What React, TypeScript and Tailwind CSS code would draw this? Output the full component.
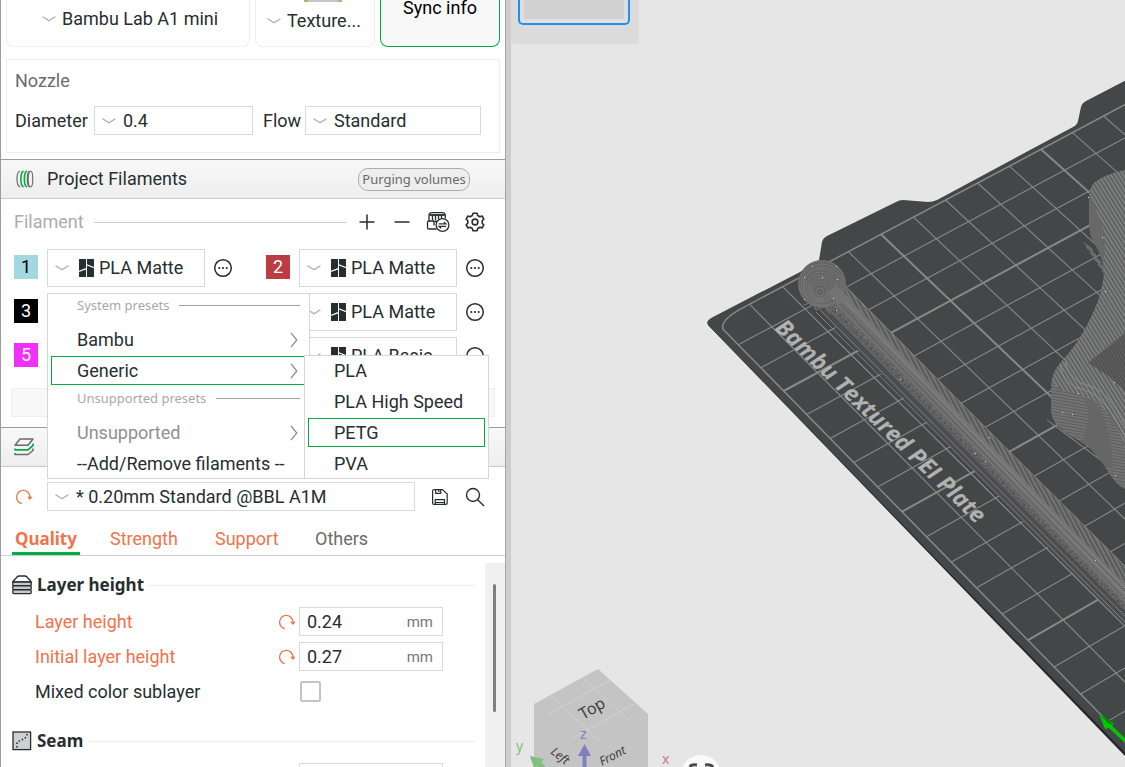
import React, { useState } from 'react'

interface Filament {
  id: number
  name: string
  badge: string
}

const filaments: Filament[] = [
  { id: 1, name: 'PLA Matte', badge: 'bg-[#a3d8e1] text-black' },
  { id: 2, name: 'PLA Matte', badge: 'bg-[#bb3d43] text-white' },
  { id: 3, name: 'PLA Matte', badge: 'bg-black text-white' },
  { id: 4, name: 'PLA Matte', badge: 'bg-[#3f8e43] text-white' },
  { id: 5, name: 'PLA Basic', badge: 'bg-[#f330f9] text-white' },
  { id: 6, name: 'PLA Basic', badge: 'bg-[#f7d959] text-black' }
]

const genericTypes = ['PLA', 'PLA High Speed', 'PETG', 'PVA']

const tabs = [
  { name: 'Quality', changed: true, width: 'w-[68px]' },
  { name: 'Strength', changed: true, width: 'w-[78px]' },
  { name: 'Support', changed: true, width: 'w-[73px]' },
  { name: 'Others', changed: false, width: 'w-[64px]' }
]

// ---------- icons ----------

const ChevronDown = ({ className = '' }: { className?: string }) => (
  <svg className={className} width="14" height="6" viewBox="0 0 14 6" fill="none" stroke="#acacac" strokeWidth="1.3">
    <path d="M.5.7 C3 2.2 4.5 3.2 7 4.8 C9.500 3.200 11 2.200 13.500.7" />
  </svg>
)

const ChevronRight = () => (
  <svg width="8" height="16" viewBox="0 0 8 16" fill="none" stroke="#8c8c8c" strokeWidth="1.3">
    <path d="M1 .8 L6.800 8 L1 15.200" />
  </svg>
)

const BrandMark = ({ className = '' }: { className?: string }) => (
  <svg className={className} width="15" height="18" viewBox="0 0 15 18">
    <path d="M0 0 H7 V9.100 L0 11.700 Z M0 13 L7 10.400 V18 H0 Z M8 0 H15 V7.900 L8 5.200 Z M8 6.500 L15 9.200 V18 H8 Z" fill="#262e30" />
  </svg>
)

const MoreIcon = () => (
  <svg width="20" height="20" viewBox="0 0 20 20" fill="none" stroke="#262e30" strokeWidth="1.500">
    <circle cx="10" cy="10" r="8.300" />
    <g fill="#262e30" stroke="none">
      <circle cx="6.300" cy="10" r="1.100" />
      <circle cx="10" cy="10" r="1.100" />
      <circle cx="13.700" cy="10" r="1.100" />
    </g>
  </svg>
)

const SpoolIcon = () => (
  <svg width="20" height="20" viewBox="0 0 20 20" fill="none" strokeWidth="1.200">
    <path d="M5 2 C1 3.500 1 16.500 5 18" stroke="#6b6b6b" />
    <path d="M8.500 2 C5 3.500 5 16.500 8.500 18 M12 2 C8.500 3.500 8.500 16.500 12 18" stroke="#00ae42" strokeWidth="1.600" />
    <path d="M14.500 2 C11.500 3.500 11.500 16.500 14.500 18" stroke="#6b6b6b" />
    <ellipse cx="15.500" cy="10" rx="2.300" ry="8" stroke="#6b6b6b" />
  </svg>
)

const LayersIcon = () => (
  <svg width="20" height="18" viewBox="0 0 20 18" fill="none" strokeWidth="1.500" strokeLinejoin="round">
    <path d="M6 1 H19 L14 7.300 H1 Z" stroke="#6b6b6b" />
    <path d="M1 10.500 V11.800 H14 L19 7.500 V5.500" stroke="#00ae42" strokeWidth="1.700" />
    <path d="M1 15 V16.500 H14 L19 12.500 V10.500" stroke="#6b6b6b" />
  </svg>
)

const AmsIcon = () => (
  <svg width="24" height="22" viewBox="0 0 24 22" fill="none" stroke="#262e30" strokeWidth="1.300">
    <path d="M3 10 V4.500 Q3 1.600 6 1.600 H16 Q19.300 1.600 19.300 4.500 V7.500" />
    <path d="M3.500 4 H18.800" strokeWidth="1.800" />
    <path d="M6.500 4 V9.500 M9.500 4 V9.500 M12.500 4 V8.500 M15.500 4 V7.500" />
    <path d="M8 10 H3 Q1.500 10 1.500 11.500 V16.700 Q1.500 18 3 18 H10.500 M8 10 V14.500 M8 10.500 H11" />
    <circle cx="16.500" cy="14" r="6.400" fill="#fff" />
    <path d="M12.800 12.800 H20 L17.800 10.900 M20.200 15.300 H13 L15.200 17.200" strokeWidth="1.200" />
  </svg>
)

const GearIcon = () => (
  <svg width="20" height="20" viewBox="0 0 20 20" fill="none" stroke="#262e30" strokeWidth="1.600" strokeLinejoin="round">
    <path d="M8 1.300 H12 L12.700 3.500 L14.800 4.700 L17 4 L18.800 7.200 L17.200 8.800 V11.200 L18.800 12.800 L17 16 L14.800 15.300 L12.700 16.500 L12 18.700 H8 L7.300 16.500 L5.200 15.300 L3 16 L1.200 12.800 L2.800 11.200 V8.800 L1.200 7.200 L3 4 L5.200 4.700 L7.300 3.500 Z" />
    <circle cx="10" cy="10" r="2.900" />
  </svg>
)

const ResetIcon = () => (
  <svg width="18" height="16" viewBox="0 0 18 16" fill="none" stroke="#f0734b" strokeWidth="1.300">
    <path d="M6.700 14.600 A6.700 6.700 0 1 1 15 8" />
    <path d="M12 7.700 H17.600 L14.900 11 Z" fill="#f0734b" stroke="none" />
  </svg>
)

const SaveIcon = () => (
  <svg width="18" height="18" viewBox="0 0 18 18" fill="none" stroke="#262e30" strokeWidth="1.200">
    <path d="M3 1.600 H11.500 L16.200 6 V15 Q16.200 16.400 14.800 16.400 H3 Q1.600 16.400 1.600 15 V3 Q1.600 1.600 3 1.600 Z" />
    <path d="M4.700 1.600 V5.300 H9.700 V1.600 M7.800 2 V4 M4.200 16.400 V11.700 H13.500 V16.400 M4.200 14.500 H13.500" />
  </svg>
)

const SearchIcon = () => (
  <svg width="20" height="20" viewBox="0 0 20 20" fill="none" stroke="#262e30" strokeWidth="1.400">
    <circle cx="8" cy="8" r="6.500" />
    <path d="M12.700 12.700 L19 19" />
  </svg>
)

const LayerHeightIcon = () => (
  <svg width="20" height="20" viewBox="0 0 20 20" fill="#c9c9c9" stroke="#262e30" strokeWidth="1.300">
    <path d="M.8 7 Q1 6 4 3.200 Q5.500 1 7 1 H13 Q14.500 1 16 3.200 Q19 6 19.200 7 Z" fill="#fff" />
    <rect x=".8" y="7" width="18.400" height="3.700" rx="1" />
    <rect x=".8" y="10.900" width="18.400" height="3.700" rx="1" />
    <rect x=".8" y="14.900" width="18.400" height="3.700" rx="1" />
  </svg>
)

const SeamIcon = () => (
  <svg width="20" height="20" viewBox="0 0 20 20" fill="#cfcfcf" stroke="#262e30" strokeWidth="1.300">
    <rect x="1" y="1" width="17.600" height="17.600" />
    <path d="M5 16.500 V11.500 L9 9 L13 7.500 L16 2" fill="none" strokeDasharray="1.500 2" strokeWidth="1.600" />
  </svg>
)

// ---------- shared controls ----------

interface ComboProps {
  label: string
  value: string
  className?: string
  selectClass?: string
  icon?: boolean
}

const Combo: React.FC<ComboProps> = ({
  label,
  value,
  className = 'h-[29px]',
  selectClass = 'border border-[#d9d9d9] pl-7',
  icon = false
}) => (
  <div className={`relative ${className}`}>
    <select
      aria-label={label}
      className={`block h-full w-full appearance-none bg-white outline-none ${selectClass}`}
    >
      <option>{value}</option>
    </select>
    <ChevronDown className="pointer-events-none absolute top-1/2 left-2 -translate-y-1/2" />
    {icon && <BrandMark className="pointer-events-none absolute top-1/2 left-8 -translate-y-1/2" />}
  </div>
)

const MenuHeading = ({ children }: { children: React.ReactNode }) => (
  <div className="mb-[5px] flex h-6 items-center gap-2.5 pr-[9px] pb-0.5 pl-[29px] font-['Noto_Sans',sans-serif] text-[13px] text-[#a8a8a8]">
    {children}
    <span className="h-px flex-1 bg-[#a0a0a0]" />
  </div>
)

const PresetMenu = () => {
  const [hovered, setHovered] = useState('PETG')

  return (
    <div className="absolute top-0 left-0 z-10 flex w-[263px] flex-col gap-0.5 border border-[#d6d6d6] bg-white">
      <MenuHeading>System presets</MenuHeading>
      <button className="mx-[3px] flex h-[29px] items-center justify-between border border-transparent pr-[7px] pl-[25px]">
        Bambu
        <ChevronRight />
      </button>
      <button className="mx-[3px] flex h-[29px] items-center justify-between border border-[#00ae42] pr-[7px] pl-[25px]">
        Generic
        <ChevronRight />
      </button>
      <MenuHeading>Unsupported presets</MenuHeading>
      <button className="mx-[3px] flex h-[29px] items-center justify-between border border-transparent pr-[7px] pl-[25px] text-[#909090]">
        Unsupported
        <ChevronRight />
      </button>
      <button className="mx-[3px] flex h-[29px] items-center border border-transparent pl-[25px] whitespace-nowrap">
        --Add/Remove filaments --
      </button>

      <div className="absolute -bottom-px left-64 flex w-[185px] flex-col gap-0.5 border border-[#d6d6d6] bg-white">
        {genericTypes.map(type => (
          <button
            key={type}
            onMouseEnter={() => setHovered(type)}
            className={`mx-[3px] flex h-[29px] items-center border pl-[25px] whitespace-nowrap ${
              hovered === type ? 'border-[#00ae42]' : 'border-transparent'
            }`}
          >
            {type}
          </button>
        ))}
      </div>
    </div>
  )
}

const GroupTitle = ({ icon, children }: { icon: React.ReactNode; children: React.ReactNode }) => (
  <div className="flex h-7 items-center gap-[5px]">
    {icon}
    <h3 className="font-['Noto_Sans',sans-serif] text-[17px] font-bold">{children}</h3>
    <span className="h-px flex-1 bg-[#ececec]" />
  </div>
)

const NumberRow = ({ id, label, value }: { id: string; label: string; value: string }) => (
  <div className="mb-1.5 flex h-[29px] items-center pl-[23px]">
    <label htmlFor={id} className="flex-1 text-[#f0734b]">{label}</label>
    <button aria-label={`Reset ${label}`} className="mr-[3px]">
      <ResetIcon />
    </button>
    <div className="mr-8 flex h-full w-36 items-center border border-[#d9d9d9] pr-[9px] pl-[7px]">
      <input id={id} defaultValue={value} className="w-0 flex-1 outline-none" />
      <span className="text-[15px] text-[#777]">mm</span>
    </div>
  </div>
)

// ---------- 3D view ----------

// bed coordinates (cells of 10 mm) to screen
const project = (u: number, v: number) => {
  const w = 1 + 0.003125 * u - 0.00595 * v
  return [(716 + 35.75 * u + 17.88 * v) / w, (322 - 16.8 * u + 20.67 * v) / w]
}

const bedLine = (u1: number, v1: number, u2: number, v2: number) => {
  const [x1, y1] = project(u1, v1)
  const [x2, y2] = project(u2, v2)
  return `M${x1.toFixed(1)} ${y1.toFixed(1)} L${x2.toFixed(1)} ${y2.toFixed(1)}`
}

const steps = Array.from({ length: 18 }, (_, i) => i)

const zigzag = (x: number, y: number, dx: number, dy: number, n: number) => {
  let d = `M${x} ${y}`
  for (let i = 0; i < n; i++) {
    d += ` l7 5 l${dx} ${dy} l-7 -5 l${dx} ${dy}`
  }
  return d
}

const Bed = () => (
  <g>
    <path
      d="M708 325 L1125 756 V751 L711 321 Z"
      fill="#242727"
    />
    <path
      d="M713 317 L800 272 L819 260 L822 242 Q823 238 827 236 L896 202 Q899 200 903 200 L928 202 Q933 202 937 200 L1073 127 Q1077 125 1078 121 L1081 107 Q1082 103 1086 101 L1140 73 V768 L708 325 Q705 321 713 317 Z"
      fill="#434747"
    />
    <g fill="none" stroke="#858a87">
      {steps.filter(i => i > 0).map(i => (
        <path key={`u${i}`} d={bedLine(i, 0, i, 18)} strokeWidth={i % 5 === 0 ? 2 : 1.1} />
      ))}
      {steps.filter(i => i > 0).map(i => (
        <path key={`v${i}`} d={bedLine(0, i, 18, i)} strokeWidth={i % 5 === 3 ? 2 : 1.1} />
      ))}
      <path d={`${bedLine(18, 0, 0.8, 0)} Q720 320 723 329 L${bedLine(0, 0.7, 0, 16).slice(1)}`} strokeWidth="1.500" />
    </g>
    <text
      transform="translate(774 329) rotate(44)"
      fontFamily="'Open Sans', sans-serif"
      fontWeight="700"
      fontStyle="italic"
      fontSize="23"
      fill="#b0b2b1"
    >
      Bambu Textured PEI Plate
    </text>
  </g>
)

const sparks = [
  [812, 266], [822, 277], [836, 266], [837, 279], [804, 277], [833, 298], [836, 310], [900, 379],
  [989, 437], [975, 453], [985, 461], [1095, 560], [804, 299], [1105, 291], [1078, 393], [1062, 412],
  [1072, 414], [1115, 475], [1114, 382], [1088, 197], [1102, 237]
]

const Models = () => (
  <g>
    <defs>
      <pattern id="hatch" width="4" height="4" patternUnits="userSpaceOnUse" patternTransform="rotate(-28)">
        <rect width="4" height="4" fill="#747474" />
        <rect width="1.500" height="4" fill="#505252" />
      </pattern>
      <pattern id="steep" width="3.500" height="3.500" patternUnits="userSpaceOnUse" patternTransform="rotate(-32)">
        <rect width="4" height="4" fill="#7e7e7e" />
        <rect width="1.300" height="4" fill="#575858" />
      </pattern>
      <pattern id="wall" width="3" height="3" patternUnits="userSpaceOnUse" patternTransform="rotate(10)">
        <rect width="3" height="3" fill="#737373" />
        <rect width="3" height="1" fill="#5d5d5d" />
      </pattern>
      <pattern id="notch" width="3" height="3" patternUnits="userSpaceOnUse" patternTransform="rotate(60)">
        <rect width="3" height="3" fill="#5d5d5d" />
        <rect width="3" height="1" fill="#4d4d4d" />
      </pattern>
    </defs>

    {/* rod */}
    <path d="M815 306 L830 300 L1125 600 V627 Z" fill="#4b4e4e" />
    <path d="M804 305 l8 -3 l4 8 l8 -4 l6 8 M808 312 L1125 626 M816 312 L1125 622 M820 310 L1125 616" stroke="#858686" strokeWidth=".9" fill="none" />
    <path d="M823 305 L838 295 L1125 582 V611 Z" fill="#676767" />
    <path d="M832 284 L846 286 L983 425 L1125 566 V585 Z" fill="url(#hatch)" />
    <path d="M830 292 L838 288 L1125 584 V598 Z" fill="#747474" />
    <path d="M834 290 L1125 588 M834 295 L1125 594 M830 297 L1125 601 M845 286 L983 425 L1125 566" stroke="#8a8a8a" strokeWidth=".8" fill="none" />
    <path d="M832 293 L1125 591 M831 302 L1125 605" stroke="#585858" strokeWidth=".8" />
    <path d="M829 304 L1125 608" stroke="#505151" strokeWidth="2" strokeDasharray="2 3 1 2 3 4" />
    <path d="M828 306 L1125 611" stroke="#4c4e4e" strokeWidth="1" strokeDasharray="3 2 6 2" />
    <path d="M830 301 L1125 604" stroke="#868686" strokeWidth=".8" strokeDasharray="2 5 4 3" />

    {/* ball end */}
    <circle cx="822" cy="284" r="24" fill="#646464" />
    <g fill="none" stroke="#7c7c7c" strokeWidth=".7">
      <circle cx="820" cy="292" r="4" />
      <circle cx="820" cy="291" r="7" />
      <circle cx="820" cy="290" r="9" />
      <circle cx="821" cy="289" r="11" />
      <circle cx="821" cy="288" r="13" />
      <circle cx="821" cy="287" r="15" />
      <circle cx="821" cy="286" r="17" />
      <circle cx="822" cy="286" r="19" />
      <circle cx="822" cy="285" r="21" />
      <circle cx="822" cy="284" r="23" />
    </g>
    <path d="M826 293 L837 286 L852 300 L838 304 Z" fill="#747474" />

    {/* large part */}
    <path d={zigzag(1084, 243, 2, 3, 8)} fill="none" stroke="#7b7d7c" strokeWidth="1" />
    <path d={zigzag(1047, 420, 4, 3, 11)} fill="none" stroke="#7b7d7c" strokeWidth="1" />
    <path
      d="M1125 170 Q1105 174 1095 182 Q1089 187 1089 198 V223 Q1089 235 1095 244 Q1104 258 1104 272 Q1103 295 1087 325 Q1077 345 1060 363 Q1051 373 1051 388 V408 Q1051 420 1060 428 Q1068 435 1080 441 Q1098 452 1107 470 Q1115 484 1125 489 Z"
      fill="url(#steep)"
    />
    <path d="M1089 192 V223 Q1089 235 1095 244 Q1100 252 1103 266 Q1107 240 1102 225 Q1094 205 1089 192 Z" fill="#686868" />
    <path d="M1052 382 Q1051 390 1051 408 Q1051 420 1060 428 Q1068 435 1080 441 Q1098 452 1107 470 Q1115 484 1125 489 V450 Q1118 420 1098 403 Q1078 392 1063 391 Z" fill="url(#wall)" />
    <path d="M1094 400 Q1110 420 1113 468 L1105 466 Q1090 447 1082 441 Q1092 420 1085 398 Z" fill="#666" />
    <path d="M1125 333 L1088 363 L1108 376 L1125 391 Z" fill="url(#notch)" />
    <path d="M1060 365 Q1064 387 1085 390 Q1108 398 1125 438 M1065 362 Q1070 382 1092 387 Q1110 393 1125 425" fill="none" stroke="#929292" strokeWidth=".8" />
    <g fill="#e2e2e2">
      {sparks.map(([x, y]) => <rect key={`${x}-${y}`} x={x} y={y} width="1" height="1" />)}
    </g>
  </g>
)

const ViewCube = () => (
  <g fontFamily="'Noto Sans', sans-serif">
    <path d="M534 704 L598 669 L648 714 V767 H534 Z" fill="#c4c4c4" />
    <path d="M547 715 L610 680 M573 738 L634 704 M551 696 L600 741 M584 679 L631 722" stroke="#d2d2d2" strokeWidth="1" />
    <text transform="translate(583 720) rotate(-30)" fontSize="16" fill="#404040">Top</text>
    <text transform="translate(550 753) rotate(38)" fontSize="12" fontStyle="italic" fill="#404040">Left</text>
    <text transform="translate(602 766) rotate(-28)" fontSize="12" fontStyle="italic" fill="#404040">Front</text>
    <path d="M578 756 L584.500 744 L591 756 H586.500 V767 H582.500 V756 Z" fill="#7f7fc1" />
    <path d="M530 756 L544 759 L541 762 L546 767 H538 L537 766 L534 768 Z" fill="#7fc07f" />
    <text x="580" y="739" fontSize="14" fill="#7f7fc1">z</text>
    <text x="516" y="751" fontSize="14" fill="#7fc07f">y</text>
    <text x="662" y="764" fontSize="14" fill="#c17f7f">x</text>
    <circle cx="701" cy="775" r="20" fill="#fafafa" />
    <path d="M690 767 Q691 764 697 765 M705 765 Q711 764 713 767" stroke="#4a4a4a" strokeWidth="3" fill="none" />
  </g>
)

const PlateView = () => (
  <main className="relative min-w-0 flex-1 bg-[#e6e6e6]">
    <svg className="block h-full w-full" viewBox="511 0 614 767" preserveAspectRatio="xMinYMin slice">
      <Bed />
      <Models />
      <ViewCube />
      <path d="M1099 714 L1114 723 L1112 726 L1126 739 V744 L1109 728 L1105 729 Z" fill="#00c800" />
      <path d="M1099 714 L1114 723 L1110 725 Z" fill="#008a00" />
    </svg>
    <div className="absolute top-0 left-0 h-11 w-32 rounded-b-sm bg-[#dbdbdb] pr-[9px] pl-[7px]">
      <button aria-label="Plate 1" className="block h-[25px] w-full rounded-b-[5px] border-2 border-t-0 border-[#2490ee] bg-[#dfdfdf] px-1 pb-1">
        <span className="block h-full bg-[#d2d2d2]" />
      </button>
    </div>
  </main>
)

// ---------- page ----------

export default function App() {
  const [activeTab, setActiveTab] = useState('Quality')

  return (
    <div className="flex h-screen overflow-hidden bg-white font-['HarmonyOS_Sans','Roboto',sans-serif] text-lg leading-6 text-[#262e30]">
      <aside className="flex w-[511px] shrink-0 flex-col border-r-[5px] border-l border-l-[#9c9c9c] border-r-[#cdcdcd]">
        <div className="flex min-h-0 flex-1 flex-col border-r border-[#a5a5a5]">
          {/* printer */}
          <div className="flex h-[47px] shrink-0 gap-[5px] pr-[5px] pl-[5px]">
            <div className="w-[244px] rounded-b-lg border border-t-0 border-[#eee] pt-[5px] pl-[27px]">
              <Combo label="Printer" value="Bambu Lab A1 mini" className="h-7" selectClass="pl-7" />
            </div>
            <div className="flex w-[120px] flex-col rounded-b-lg border border-t-0 border-[#eee] pl-[3px]">
              <span className="ml-[45px] h-0.5 w-[38px] border-x-4 border-[#c9a878] bg-[#c6c6c6]" />
              <Combo label="Plate type" value="Texture..." className="mt-[5px] h-7" selectClass="pl-7" />
            </div>
            <button className="flex flex-1 justify-center rounded-b-lg border border-t-0 border-[#00ae42] bg-[#f8f8f8] leading-4 text-black">
              Sync info
            </button>
          </div>

          <section className="mt-3 mr-[5px] ml-[5px] h-[94px] shrink-0 border border-[#eee] pt-[9px] pl-2">
            <h2 className="text-[#6b6b6b]">Nozzle</h2>
            <div className="mt-[13px] flex h-[29px] items-center">
              <span className="w-[79px]">Diameter</span>
              <Combo label="Diameter" value="0.4" className="h-[29px] w-[159px]" />
              <span className="ml-2.5 w-[42px]">Flow</span>
              <Combo label="Flow" value="Standard" className="h-[29px] w-44" />
            </div>
          </section>

          <header className="mt-1.5 flex h-10 shrink-0 items-center border-t border-b border-t-[#9c9c9c] border-b-[#c8c8c8] bg-linear-to-b from-[#f8f8f8] to-[#eee] pr-[35px] pl-[14px]">
            <SpoolIcon />
            <h2 className="ml-3 flex-1">Project Filaments</h2>
            <button className="h-[23px] w-28 rounded-[10px] border border-[#acacac] bg-[#eee] font-['Noto_Sans',sans-serif] text-[13px] leading-5 whitespace-nowrap text-[#6b6b6b]">
              Purging volumes
            </button>
          </header>

          {/* filament list */}
          <div className="mt-[11px] flex h-6 shrink-0 items-center pr-5 pl-[13px]">
            <span className="text-[#acacac]">Filament</span>
            <span className="mr-2.5 ml-2.5 h-px flex-1 bg-[#cecece]" />
            <button aria-label="Add filament" className="mr-[11px] flex h-5 w-5 items-center justify-center">
              <svg width="16" height="16" viewBox="0 0 16 16" stroke="#262e30" strokeWidth="1.500"><path d="M8 .5 V15.500 M.5 8 H15.500" /></svg>
            </button>
            <button aria-label="Remove filament" className="mr-[14px] ml-1 flex h-5 w-5 items-center justify-center">
              <svg width="16" height="16" viewBox="0 0 16 16" stroke="#262e30" strokeWidth="1.500"><path d="M.5 8 H15.500" /></svg>
            </button>
            <button aria-label="Sync AMS" className="mr-[15px]"><AmsIcon /></button>
            <button aria-label="Filament settings"><GearIcon /></button>
          </div>

          <div className="mt-[15px] grid shrink-0 grid-cols-2 gap-x-[33px] gap-y-1.5 pr-5 pl-[13px]">
            {filaments.map(f => (
              <div key={f.id} className="flex h-[38px] items-center">
                <span className={`-mt-0.5 flex h-6 w-6 items-center justify-center ${f.badge}`}>{f.id}</span>
                <div className="relative mr-2 ml-[9px] flex-1">
                  <Combo
                    label={`Filament ${f.id}`}
                    value={f.name}
                    className="h-[38px]"
                    selectClass="border border-[#d9d9d9] pl-[51px]"
                    icon
                  />
                  {f.id === 3 && <PresetMenu />}
                </div>
                <button aria-label={`Edit filament ${f.id}`}><MoreIcon /></button>
              </div>
            ))}
          </div>

          <div className="mt-[13px] mr-2.5 ml-2.5 h-[29px] shrink-0 border border-[#eee] bg-[#f8f8f8]" />

          <header className="mt-2.5 flex h-10 shrink-0 items-center border-t border-b border-t-[#9c9c9c] border-b-[#c8c8c8] bg-linear-to-b from-[#f8f8f8] to-[#eee] pl-[13px]">
            <LayersIcon />
          </header>

          {/* process preset */}
          <div className="mt-[15px] flex h-[29px] shrink-0 items-center pr-5 pl-[14px]">
            <button aria-label="Reset preset" className="mr-[14px]"><ResetIcon /></button>
            <Combo label="Process preset" value="* 0.20mm Standard @BBL A1M" className="h-[29px] flex-1" />
            <button aria-label="Save preset" className="mr-4 ml-4"><SaveIcon /></button>
            <button aria-label="Search settings"><SearchIcon /></button>
          </div>

          <nav className="mt-[14px] flex h-[31px] shrink-0 gap-[27px] border-b border-[#cecece] pl-[11px]">
            {tabs.map(tab => (
              <button
                key={tab.name}
                onClick={() => setActiveTab(tab.name)}
                className={`h-[30px] border-b-3 px-[3px] pt-px text-left ${tab.width} ${
                  activeTab === tab.name
                    ? "border-[#00ae42] font-['Noto_Sans',sans-serif] text-[17px] font-bold"
                    : 'border-transparent'
                } ${tab.changed ? 'text-[#f0734b]' : 'text-[#6b6b6b]'}`}
              >
                {tab.name}
              </button>
            ))}
          </nav>

          <div className="flex min-h-0 flex-1 overflow-hidden pt-[7px]">
            <div className="min-w-0 flex-1 pt-2 pr-2.5 pl-[11px]">
              <GroupTitle icon={<LayerHeightIcon />}>Layer height</GroupTitle>
              <div className="h-2" />
              <NumberRow id="layer-height" label="Layer height" value="0.24" />
              <NumberRow id="initial-layer-height" label="Initial layer height" value="0.27" />
              <div className="flex h-[29px] items-center pl-[23px]">
                <label htmlFor="mixed" className="flex-1">Mixed color sublayer</label>
                <input id="mixed" type="checkbox" className="mr-[154px] h-[21px] w-[21px] appearance-none rounded-[2px] border-2 border-[#c4c4c4]" />
              </div>
              <div className="h-[21px]" />
              <GroupTitle icon={<SeamIcon />}>Seam</GroupTitle>
              <div className="h-2" />
              <div className="flex justify-end pr-8">
                <Combo label="Seam position" value="Aligned" className="h-[29px] w-36" />
              </div>
            </div>
            <div className="flex w-5 justify-center bg-[#f0f0f0] pt-[21px] pr-0.5">
              <div className="h-32 w-[3px] rounded-full bg-[#7f7f7f]" />
            </div>
          </div>
        </div>
      </aside>

      <PlateView />
    </div>
  )
}
